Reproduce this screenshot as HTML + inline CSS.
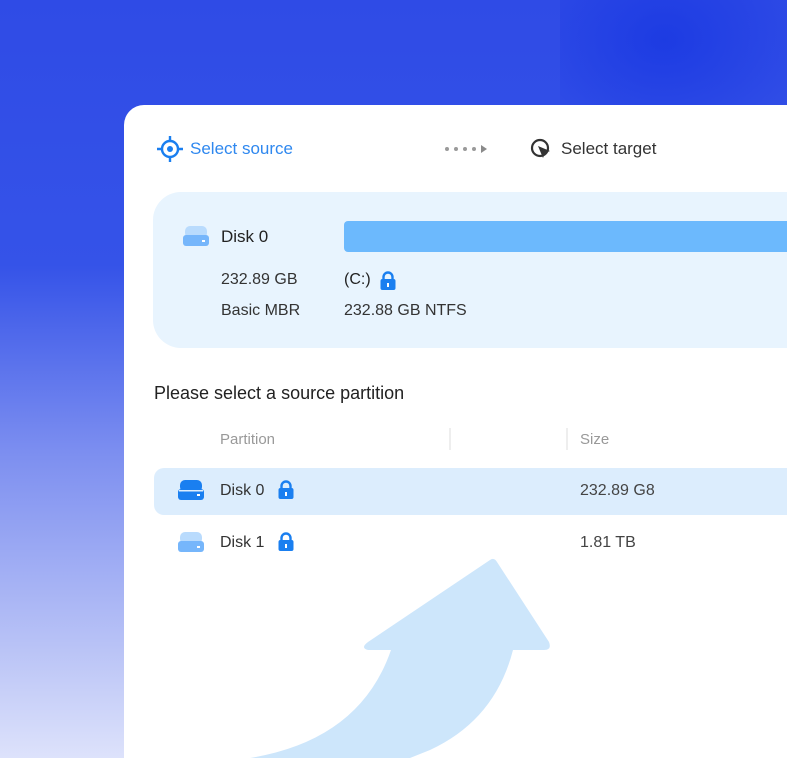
<!DOCTYPE html>
<html style="width:787px;height:758px;overflow:hidden"><head><meta charset="utf-8"><style>
*{margin:0;padding:0;box-sizing:border-box}
body{width:787px;height:758px;overflow:hidden;position:relative;font-family:"Liberation Sans",sans-serif;
background:linear-gradient(180deg,#2f4be6 0%,#3553e8 35%,#7d8ff0 60%,#b8c2f6 85%,#dde2fb 100%);}
.glow{position:absolute;left:560px;top:-40px;width:260px;height:200px;background:radial-gradient(ellipse at 40% 40%,rgba(16,48,224,0.6),rgba(16,48,224,0) 70%)}
.stripe{position:absolute;left:0;top:0;width:787px;height:758px;background:linear-gradient(120deg,rgba(255,255,255,0) 0%,rgba(255,255,255,0) 72%,rgba(255,255,255,0.12) 73%,rgba(255,255,255,0.12) 100%)}
.card{position:absolute;left:124px;top:105px;width:663px;height:653px;background:#fff;border-radius:20px 0 0 0;overflow:hidden}
.t{position:absolute;white-space:nowrap}
</style></head><body>
<div class="glow"></div>
<div class="stripe"></div>
<div class="card"></div>
<svg class="t" style="left:156px;top:135px" width="28" height="28" viewBox="0 0 28 28"><circle cx="14" cy="14" r="8" fill="none" stroke="#1a7ff0" stroke-width="2.4"/><circle cx="14" cy="14" r="3" fill="#1a7ff0"/><path d="M14 1v6M14 21v6M1 14h6M21 14h6" stroke="#1a7ff0" stroke-width="2.4"/></svg>
<div class="t" style="left:190px;top:139px;font-size:17px;color:#2f88ef">Select source</div>
<svg class="t" style="left:444px;top:145px" width="52" height="8"><g fill="#9a9a9a"><circle cx="3" cy="4" r="2"/><circle cx="12" cy="4" r="2"/><circle cx="21" cy="4" r="2"/><circle cx="30" cy="4" r="2"/></g><path d="M37 0l6 4-6 4z" fill="#8a8a8a"/></svg>
<svg class="t" style="left:529px;top:137px" width="26" height="26" viewBox="0 0 26 26"><circle cx="11" cy="11" r="8" fill="none" stroke="#333" stroke-width="2.2"/><path d="M9 9l12 5-5 2-2 5z" fill="#333"/></svg>
<div class="t" style="left:561px;top:139px;font-size:17px;color:#333">Select target</div>
<div class="t" style="left:153px;top:192px;width:634px;height:156px;background:#e8f4fe;border-radius:28px 0 0 28px"></div>
<svg class="t" style="left:183px;top:226px" width="26" height="22"><rect x="2" y="0" width="22" height="12" rx="5" fill="#b9dbfd"/><rect x="0" y="9" width="26" height="11" rx="3" fill="#76b6fb"/><rect x="19" y="14" width="3" height="2" fill="#fff"/></svg>
<div class="t" style="left:221px;top:227px;font-size:17px;color:#222">Disk 0</div>
<div class="t" style="left:344px;top:221px;width:443px;height:31px;background:#6cb9fd;border-radius:4px 0 0 4px"></div>
<div class="t" style="left:221px;top:271px;font-size:16px;color:#333">232.89 GB</div>
<div class="t" style="left:221px;top:302px;font-size:16px;color:#333">Basic MBR</div>
<div class="t" style="left:344px;top:271px;font-size:16px;color:#222">(C:)</div>
<svg class="t" style="left:379px;top:271px" width="18" height="20" viewBox="0 0 18 20"><path d="M4.5 9V6a4.5 4.5 0 019 0v3" fill="none" stroke="#1a7ff0" stroke-width="2.4"/><rect x="1.5" y="8" width="15" height="11" rx="2" fill="#1a7ff0"/><rect x="8" y="12" width="2" height="4" fill="#fff"/></svg>
<div class="t" style="left:344px;top:302px;font-size:16px;color:#333">232.88 GB NTFS</div>
<div class="t" style="left:154px;top:383px;font-size:18px;color:#222">Please select a source partition</div>
<div class="t" style="left:220px;top:431px;font-size:15px;color:#999">Partition</div>
<div class="t" style="left:449px;top:428px;width:2px;height:22px;background:#eee"></div>
<div class="t" style="left:566px;top:428px;width:2px;height:22px;background:#eee"></div>
<div class="t" style="left:580px;top:431px;font-size:15px;color:#999">Size</div>
<div class="t" style="left:154px;top:468px;width:633px;height:47px;background:#dcedfd;border-radius:10px 0 0 10px"></div>
<svg class="t" style="left:178px;top:480px" width="26" height="22"><rect x="2" y="0" width="22" height="12" rx="5" fill="#1a7ff0"/><rect x="0" y="9" width="26" height="11" rx="3" fill="#1a7ff0"/><rect x="1" y="10" width="24" height="1.5" fill="#dcedfd"/><rect x="19" y="14" width="3" height="2" fill="#fff"/></svg>
<div class="t" style="left:220px;top:482px;font-size:16px;color:#333">Disk 0</div>
<svg class="t" style="left:277px;top:480px" width="18" height="20" viewBox="0 0 18 20"><path d="M4.5 9V6a4.5 4.5 0 019 0v3" fill="none" stroke="#1a7ff0" stroke-width="2.4"/><rect x="1.5" y="8" width="15" height="11" rx="2" fill="#1a7ff0"/><rect x="8" y="12" width="2" height="4" fill="#fff"/></svg>
<div class="t" style="left:580px;top:482px;font-size:16px;color:#444">232.89 G8</div>
<svg class="t" style="left:178px;top:532px" width="26" height="22"><rect x="2" y="0" width="22" height="12" rx="5" fill="#b9dbfd"/><rect x="0" y="9" width="26" height="11" rx="3" fill="#76b6fb"/><rect x="19" y="14" width="3" height="2" fill="#fff"/></svg>
<div class="t" style="left:220px;top:534px;font-size:16px;color:#333">Disk 1</div>
<svg class="t" style="left:277px;top:532px" width="18" height="20" viewBox="0 0 18 20"><path d="M4.5 9V6a4.5 4.5 0 019 0v3" fill="none" stroke="#1a7ff0" stroke-width="2.4"/><rect x="1.5" y="8" width="15" height="11" rx="2" fill="#1a7ff0"/><rect x="8" y="12" width="2" height="4" fill="#fff"/></svg>
<div class="t" style="left:580px;top:534px;font-size:16px;color:#444">1.81 TB</div>
<svg class="t" style="left:0;top:0" width="787" height="758"><path d="M490 560 Q494 557 497 562 L549 642 Q552 650 544 650 L513 650 Q495 720 430 750 L410 758 L250 758 Q360 740 391 650 L368 650 Q360 648 368 642 Z" fill="#cde6fb"/></svg>
</body></html>
